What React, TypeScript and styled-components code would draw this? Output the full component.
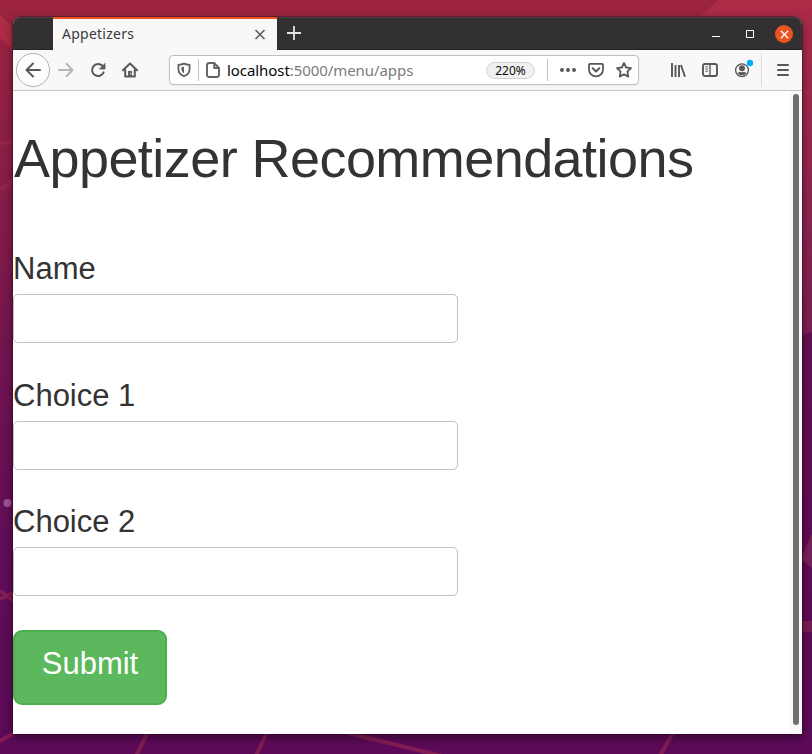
import React from "react";
import styled, { createGlobalStyle } from "styled-components";

const GlobalStyle = createGlobalStyle`
  * { box-sizing: border-box; }
  html, body { margin: 0; padding: 0; overflow: hidden; }
`;

const Desktop = styled.div`
  position: relative;
  width: 812px;
  height: 754px;
  padding: 17px 10px 20px 13px;
  overflow: hidden;
`;

const Wallpaper = styled.svg`
  position: absolute;
  inset: 0;
`;

const Window = styled.main`
  position: relative;
  display: flex;
  flex-direction: column;
  width: 789px;
  height: 717px;
  border-radius: 8px 8px 0 0;
  overflow: hidden;
  background: #fff;
  box-shadow: 0 0 0 1px rgba(30, 0, 25, 0.3), 0 3px 9px 1px rgba(0, 0, 0, 0.4);
`;

const TitleBar = styled.header`
  display: flex;
  flex: 0 0 33px;
  background: #333031;
  box-shadow: inset 0 1px 0 #454142, inset 0 -1px 0 #252324;
`;

const Tab = styled.div`
  display: flex;
  align-items: center;
  justify-content: space-between;
  width: 224px;
  height: 33px;
  margin-left: 40px;
  padding: 0 11px 0 9px;
  border-top: 2px solid #e95420;
  background: #f8f8f8;
  color: #3a3a3c;
  font: 14px/28px "Noto Sans", sans-serif;
`;

const TabTitle = styled.span`
  padding-bottom: 1px;
  letter-spacing: 0.25px;
`;

const NewTab = styled.div`
  display: flex;
  align-items: center;
  height: 32px;
  margin-left: 9px;
`;

const WindowControls = styled.div`
  display: flex;
  align-items: center;
  gap: 16px;
  margin-left: auto;
  padding: 1px 9px 0 0;
`;

const CloseButton = styled.div`
  display: grid;
  place-items: center;
  width: 18px;
  height: 18px;
  border-radius: 50%;
  background: #e95420;
`;

const Toolbar = styled.nav`
  display: flex;
  align-items: center;
  flex: 0 0 41px;
  padding: 0 10px 0 3px;
  border-bottom: 1px solid #c4c4c4;
  background: #f8f8f8;
`;

const BackButton = styled.div`
  display: grid;
  place-items: center;
  width: 34px;
  height: 34px;
  border: 1px solid #b1b1b1;
  border-radius: 50%;
  background: #fdfdfd;
`;

const NavIcons = styled.div`
  display: flex;
  gap: 16px;
  margin-left: 8px;
`;

const AddressBar = styled.div`
  display: flex;
  align-items: center;
  width: 470px;
  height: 30px;
  margin-left: 31px;
  padding: 0 6px;
  border: 1px solid #bebebe;
  border-radius: 4px;
  background: #fff;
  box-shadow: 0 1px 3px rgba(0, 0, 0, 0.06);
`;

const SiteIdentity = styled.div`
  display: flex;
  align-items: center;
  gap: 6px;
`;

const Divider = styled.i<{ $height: number }>`
  width: 1px;
  height: ${({ $height }) => $height}px;
  background: ${({ $height }) => ($height > 30 ? "#dadada" : "#c2c2c2")};
`;

const Url = styled.span`
  margin-left: 6px;
  color: #7b7b7b;
  font: 15px/28px "Noto Sans", sans-serif;
  letter-spacing: -0.07px;
`;

const Host = styled.span`
  color: #050505;
`;

const ZoomLevel = styled.span`
  width: 49px;
  height: 17px;
  margin: 0 12px 0 auto;
  border: 1px solid #d2d2d2;
  border-radius: 9px;
  background: #f0f0f0;
  color: #0c0c0d;
  text-align: center;
  font: 12px/15px "Noto Sans", sans-serif;
`;

const PageActions = styled.div`
  display: flex;
  align-items: center;
  gap: 12px;
  margin-left: 12px;
`;

const ToolActions = styled.div`
  display: flex;
  align-items: center;
  gap: 16px;
  margin: 0 7px 0 31px;
`;

const MenuButton = styled.div`
  display: flex;
  margin-left: auto;
  margin-right: 1px;
`;

const Viewport = styled.div`
  display: flex;
  flex: 1;
`;

const Page = styled.section`
  flex: 1;
  color: #333;
  font-family: "Liberation Sans", sans-serif;
`;

const Heading = styled.h1`
  margin: 36px 0 53px 1px;
  font-size: 54px;
  font-weight: 400;
  line-height: 62px;
  letter-spacing: -0.56px;
  white-space: nowrap;
`;

const Field = styled.div`
  display: flex;
  flex-direction: column;
  width: 445px;
  height: 126.5px;
`;

const Label = styled.label`
  height: 52px;
  padding-top: 9px;
  font-size: 31px;
  line-height: 36px;
`;

const Input = styled.input`
  width: 445px;
  height: 49px;
  padding: 4px 8px;
  border: 1px solid #c2c2c2;
  border-radius: 5px;
  outline: none;
  background: #fff;
  font: 31px "Liberation Sans", sans-serif;
`;

const Submit = styled.button`
  display: block;
  width: 154px;
  height: 75px;
  margin-top: 8.5px;
  padding: 0 0 7px;
  border: 2px solid #4cae4c;
  border-radius: 9px;
  background: #5cb85c;
  color: #fff;
  font: 31px/36px "Liberation Sans", sans-serif;
`;

const ScrollTrack = styled.div`
  width: 12px;
  padding: 3px 3px 9px;
  background: #f8f8f8;
`;

const ScrollThumb = styled.div`
  width: 6px;
  height: 100%;
  border-radius: 3px;
  background: #6e7070;
`;

function Background() {
  return (
    <Wallpaper width="812" height="754" viewBox="0 0 812 754">
      <defs>
        <linearGradient id="left" x1="0" y1="0" x2="0" y2="1">
          <stop offset="0" stopColor="#9c243f" />
          <stop offset=".25" stopColor="#871d48" />
          <stop offset=".5" stopColor="#701350" />
          <stop offset=".72" stopColor="#610d58" />
          <stop offset="1" stopColor="#5c0a57" />
        </linearGradient>
        <linearGradient id="right" x1="0" y1="0" x2="0" y2="1">
          <stop offset="0" stopColor="#ad2b46" />
          <stop offset=".3" stopColor="#9c294b" />
          <stop offset="1" stopColor="#7b1e52" />
        </linearGradient>
        <linearGradient id="rightLower" x1="0" y1="0" x2="0" y2="1">
          <stop offset="0" stopColor="#641050" />
          <stop offset="1" stopColor="#5c0a57" />
        </linearGradient>
      </defs>
      <path d="M0 0H812V754H0Z" fill="url(#left)" />
      <path d="M790 330H812V754H790Z" fill="url(#rightLower)" />
      <path d="M718 0H812V332L790 339V20H697Z" fill="url(#right)" />
      <path d="M0 14L15 31V51L0 38Z" fill="#ad2c43" />
      <g stroke="#9c2850" strokeWidth="4" opacity=".6" fill="none">
        <path d="M0 144L15 140M0 190L15 179M0 591L15 602M0 599L15 592M0 741L18 731" />
        <path d="M148 732L136 756M267 732L256 756M348 733L442 756M674 731L660 756" />
      </g>
      <path d="M812 533L801 559L812 568Z" fill="#78205a" />
      <path d="M800 621H812V632H800Z" fill="#812052" opacity=".8" />
      <ellipse cx="7.5" cy="503" rx="4" ry="4" fill="#9b5490" />
    </Wallpaper>
  );
}

type IconProps = { children: React.ReactNode; color?: string };

function Icon({ children, color = "#58585a" }: IconProps) {
  return (
    <svg
      width="16"
      height="16"
      viewBox="0 0 16 16"
      fill="none"
      stroke={color}
      strokeWidth="2"
      strokeLinecap="round"
      strokeLinejoin="round"
    >
      {children}
    </svg>
  );
}

export default function App() {
  return (
    <>
      <GlobalStyle />
      <Desktop>
        <Background />
        <Window>
          <TitleBar>
            <Tab>
              <TabTitle>Appetizers</TabTitle>
              <svg width="12" height="12" viewBox="0 0 12 12" stroke="#606060" strokeWidth="1.7">
                <path d="M1.5 1L10.5 10M10.5 1L1.5 10" />
              </svg>
            </Tab>
            <NewTab>
              <svg width="16" height="16" viewBox="0 0 16 16" stroke="#e4e4e4" strokeWidth="1.8">
                <path d="M1 8H15M8 1V15" />
              </svg>
            </NewTab>
            <WindowControls>
              <svg width="52" height="14" viewBox="0 0 52 14" fill="none" stroke="#fff">
                <path d="M5 9.5H13" />
                <path d="M39.5 3.5H46.5V10.5H39.5Z" />
              </svg>
              <CloseButton>
                <svg width="9" height="9" viewBox="0 0 9 9" stroke="#fff" strokeWidth="1.3">
                  <path d="M.8 .8L8.2 8.2M8.2 .8L.8 8.2" />
                </svg>
              </CloseButton>
            </WindowControls>
          </TitleBar>
          <Toolbar>
            <BackButton>
              <Icon><path d="M15 8H1.5M8 1.5L1.5 8L8 14.5" /></Icon>
            </BackButton>
            <NavIcons>
              <Icon color="#b7b7b7"><path d="M1 8H14.5M8.5 1.7L14.5 8L8.5 14.3" /></Icon>
              <Icon>
                <path d="M13.6 10.4A6 6 0 1 1 12.4 3.8" />
                <path d="M15 1.8V7H9.8Z" fill="#58585a" strokeWidth=".8" />
              </Icon>
              <Icon>
                <path d="M1 8.2L8 1.5L15 8.2M3.2 8V14.5H12.8V8" />
                <path d="M8 14V9" strokeWidth="3.8" strokeLinecap="butt" />
                <path d="M8.5 11V12.4" stroke="#ddd" strokeWidth="1" strokeLinecap="butt" />
              </Icon>
            </NavIcons>
            <AddressBar>
              <SiteIdentity>
                <Icon color="#626264">
                  <path d="M8 1.6C6 2.5 4 2.8 2.4 2.8V7C2.4 10.6 5.1 13.2 8 14.2C10.9 13.2 13.6 10.6 13.6 7V2.8C12 2.8 10 2.5 8 1.6Z" strokeWidth="1.8" />
                  <path d="M8 4.8V11.4C6.3 10.3 5.4 8.8 5.4 7V5.3Z" fill="#626264" stroke="none" />
                </Icon>
                <Divider $height={22} />
                <Icon color="#626264">
                  <path d="M9.2 1H4.5Q2 1 2 3.2V12.8Q2 15 4.2 15H11.8Q14 15 14 12.8V5.8ZM9.2 1V6H14" strokeWidth="1.9" />
                </Icon>
              </SiteIdentity>
              <Url><Host>localhost</Host>:5000/menu/apps</Url>
              <ZoomLevel>220%</ZoomLevel>
              <Divider $height={22} />
              <PageActions>
                <svg width="16" height="16" viewBox="0 0 16 16" fill="#58585a">
                  <circle cx="2" cy="8" r="2" />
                  <circle cx="8" cy="8" r="2" />
                  <circle cx="14" cy="8" r="2" />
                </svg>
                <Icon>
                  <path d="M2 1.8H14Q15 1.8 15 2.8V7.4A7 7 0 0 1 1 7.4V2.8Q1 1.8 2 1.8Z" strokeWidth="1.8" />
                  <path d="M4.7 6.3L8 9.5L11.3 6.3" />
                </Icon>
                <Icon>
                  <path d="M8 1L10.1 5.5L15 6.1L11.4 9.6L12.3 14.6L8 12.2L3.7 14.6L4.6 9.6L1 6.1L5.9 5.5Z" strokeWidth="1.8" />
                </Icon>
              </PageActions>
            </AddressBar>
            <ToolActions>
              <Icon>
                <path d="M2 1V15M5.5 3V15M9 3V15M10.9 3L15 14.8" strokeWidth="1.9" strokeLinecap="butt" />
              </Icon>
              <Icon>
                <rect x="1" y="2" width="14" height="12" rx="2" strokeWidth="1.9" />
                <path d="M8 2V14" strokeWidth="1.4" />
                <path d="M3.3 4.8H6M3.3 7H6M3.3 9.2H6" strokeWidth="1" strokeLinecap="butt" />
              </Icon>
              <svg width="20" height="24" viewBox="0 0 20 24" fill="none" stroke="#58585a">
                <circle cx="8" cy="12.2" r="6.4" strokeWidth="1.3" />
                <circle cx="8" cy="10.3" r="3" fill="#58585a" stroke="none" />
                <path d="M3.5 15Q5 13.3 8 14.2Q11 13.3 12.5 15Q11 17.4 8 17.4Q5 17.4 3.5 15Z" fill="#58585a" stroke="none" />
                <circle cx="16" cy="5" r="3.2" fill="#00adff" stroke="none" />
              </svg>
            </ToolActions>
            <Divider $height={34} />
            <MenuButton>
              <svg width="16" height="16" viewBox="0 0 16 16" stroke="#58585a" strokeWidth="2" strokeLinecap="round">
                <path d="M3 3H13M3 8H13M3 13H13" />
              </svg>
            </MenuButton>
          </Toolbar>
          <Viewport>
            <Page>
              <Heading>Appetizer Recommendations</Heading>
              {["Name", "Choice 1", "Choice 2"].map((name) => (
                <Field key={name}>
                  <Label htmlFor={name}>{name}</Label>
                  <Input id={name} />
                </Field>
              ))}
              <Submit>Submit</Submit>
            </Page>
            <ScrollTrack><ScrollThumb /></ScrollTrack>
          </Viewport>
        </Window>
      </Desktop>
    </>
  );
}
